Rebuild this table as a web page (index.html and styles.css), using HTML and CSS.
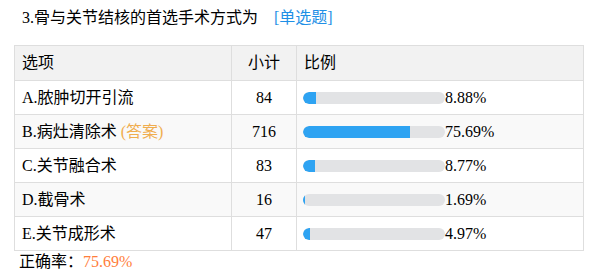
FILE: index.html
```html
<!DOCTYPE html>
<html lang="zh">
<head>
<meta charset="utf-8">
<link rel="stylesheet" href="styles.css">
</head>
<body>
<div class="wrap">
  <div class="title">3.骨与关节结核的首选手术方式为<span class="qtype">[单选题]</span></div>
  <table class="stats">
    <colgroup><col class="c1"><col class="c2"><col class="c3"></colgroup>
    <thead>
      <tr><th class="opt">选项</th><th class="num">小计</th><th class="opt">比例</th></tr>
    </thead>
    <tbody>
      <tr><td>A.脓肿切开引流</td><td class="num">84</td><td><div class="pc"><div class="bar"><div class="fill" style="width:8.88%"></div></div><span>8.88%</span></div></td></tr>
      <tr class="alt"><td>B.病灶清除术 <span class="ans">(答案)</span></td><td class="num">716</td><td><div class="pc"><div class="bar"><div class="fill" style="width:75.69%"></div></div><span>75.69%</span></div></td></tr>
      <tr><td>C.关节融合术</td><td class="num">83</td><td><div class="pc"><div class="bar"><div class="fill" style="width:8.77%"></div></div><span>8.77%</span></div></td></tr>
      <tr class="alt"><td>D.截骨术</td><td class="num">16</td><td><div class="pc"><div class="bar"><div class="fill" style="width:1.69%"></div></div><span>1.69%</span></div></td></tr>
      <tr><td>E.关节成形术</td><td class="num">47</td><td><div class="pc"><div class="bar"><div class="fill" style="width:4.97%"></div></div><span>4.97%</span></div></td></tr>
    </tbody>
  </table>
  <div class="rate">正确率：<span class="rv">75.69%</span></div>
</div>
</body>
</html>
```

FILE: styles.css
```css
html, body {
  margin: 0;
  padding: 0;
  background: #fff;
}
body {
  font-family: "Liberation Serif", "Noto Sans CJK SC", serif;
  font-size: 16px;
  color: #000;
}
.wrap {
  padding: 0 14px;
}
.title {
  height: 45px;
  padding-left: 8px;
  line-height: 36px;
  font-family: "Liberation Serif", "Noto Sans CJK SC", sans-serif;
}
.qtype {
  color: #1e8fe6;
  margin-left: 16px;
}
.stats {
  width: 570px;
  border-collapse: collapse;
  table-layout: fixed;
}
.c1 { width: 217px; }
.c2 { width: 65px; }
.stats th, .stats td {
  border: 1px solid #dedede;
  height: 33px;
  padding: 0 0 0 7px;
  font-weight: normal;
  text-align: left;
  vertical-align: middle;
  line-height: 20px;
}
.stats th {
  height: 34px;
  background: #f2f2f2;
}
.stats .num {
  text-align: center;
  padding: 0;
}
.stats tr.alt td {
  background: #f9f9f9;
}
.stats td:last-child {
  padding-left: 6px;
}
.pc {
  display: flex;
  align-items: center;
}
.bar {
  width: 142px;
  height: 12px;
  border-radius: 6px;
  background: #e2e3e5;
  overflow: hidden;
}
.fill {
  height: 100%;
  background: #2ea3f2;
  border-radius: 6px 0 0 6px;
}
.ans {
  color: #f0ad4e;
}
.rate {
  padding-left: 5px;
  line-height: 22px;
}
.rv {
  color: #ff7e3b;
}
```
